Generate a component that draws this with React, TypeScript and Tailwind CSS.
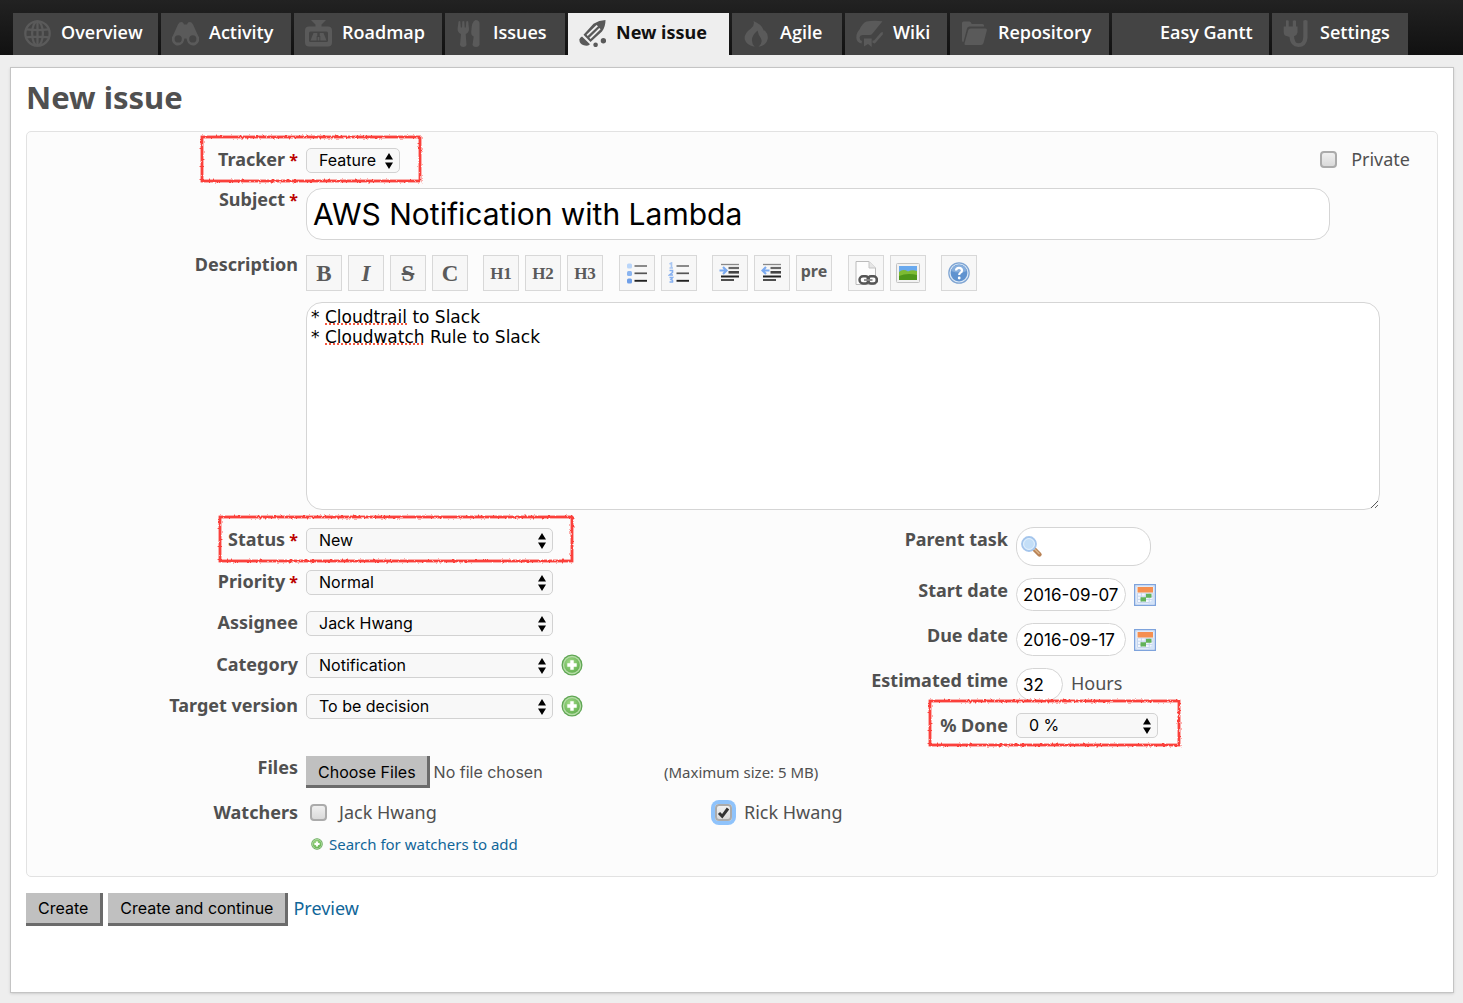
import React, { useId, type ReactNode } from 'react';

const ui = "font-['Inter',sans-serif]";

/* ---------- Tab icons ---------- */

function TabIcon({ children }: { children: ReactNode }) {
  return (
    <svg viewBox="0 0 27 27" className="h-[27px] w-[27px] shrink-0" fill="currentColor" aria-hidden="true">
      {children}
    </svg>
  );
}

const globe = (
  <TabIcon>
    <g fill="none" stroke="currentColor" strokeWidth="2.3">
      <circle cx="13.5" cy="13.5" r="12.2" />
      <ellipse cx="13.5" cy="13.5" rx="5.4" ry="12.2" />
      <path d="M2.5 9.4Q13.5 11 24.5 9.4M2 17.4Q13.5 16 25 17.4M13.5 1.5V25.5" />
    </g>
  </TabIcon>
);

const binoculars = (
  <TabIcon>
    <path
      fillRule="evenodd"
      d="M6 4.5Q8 1 11 2.5L12 4.5H15L16 2.5Q19 1 21 4.5L26 15.5A6.2 6.2 0 1 1 15 20.5L14.6 18.5H12.4L12 20.5A6.2 6.2 0 1 1 1 15.5ZM6.2 15.3A3.6 3.6 0 1 0 6.2 22.5A3.6 3.6 0 1 0 6.2 15.3ZM20.8 15.3A3.6 3.6 0 1 0 20.8 22.5A3.6 3.6 0 1 0 20.8 15.3Z"
    />
  </TabIcon>
);

const roadmap = (
  <TabIcon>
    <path d="M6 0H21L16.5 4.5V7H10.5V4.5Z" />
    <path
      fillRule="evenodd"
      d="M4 6.5H23Q27 6.5 27 10.5V22.5Q27 26.5 23 26.5H4Q0 26.5 0 22.5V10.5Q0 6.5 4 6.5ZM5.5 11.5Q4 11.5 4 13V20.5Q4 22 5.5 22H21.5Q23 22 23 20.5V13Q23 11.5 21.5 11.5Z"
    />
    <path d="M8.5 13H12.3V16H11.7V20.5H5.5ZM14.7 13H18.5L21.5 20.5H15.3V16H14.7ZM12.6 17H14.4V20.5H12.6Z" />
  </TabIcon>
);

const cutlery = (
  <TabIcon>
    <path d="M2.5 1.5Q3.5 .5 4.3 1.5L4.8 7.5H6L6.3 1.5Q7.3 .5 8.3 1.5L8.7 7.5H9.8L10.3 1.5Q11.3 .5 12.2 1.5L13 9Q13 12.5 9.7 14L10.5 25Q9.8 27 7.3 27T4 25L5 14Q1.6 12.5 1.6 9Z" />
    <path d="M19.5 0Q23.5 0 23.5 3.5V25Q22.8 27 20 27T16.5 25L17.7 16.5Q15 15.5 15.2 12Q15.7 1 19.5 0Z" />
  </TabIcon>
);

const pencil = (
  <TabIcon>
    <path
      fillRule="evenodd"
      d="M26.5 0Q26.5 7 23 11.5L11.5 22L4.5 14.8L14.5 3.8Q20 .3 26.5 0ZM17.5 5L7.5 14.7L8.7 15.9L19 6.3ZM20.3 8L10.3 17.7L11.6 19L21.6 9.3Z"
    />
    <path d="M3 16.5L11 24.2Q8.5 26.5 4.8 25.3Q.5 24 .3 19.5Q1 17.5 3 16.5Z" />
    <circle cx="24.4" cy="20.7" r="2.7" />
    <circle cx="16.6" cy="24.8" r="2.3" />
  </TabIcon>
);

const flame = (
  <TabIcon>
    <path d="M10.5 1Q19 4.5 20.5 10Q21.3 12 21.5 10Q26 15 24.5 19.5Q23 25.5 15.5 26.8Q20 23 18 18.5Q15.5 15.5 14.5 10.5Q9.5 15 9 19Q8.5 24 11.7 26.8Q3.5 25.5 1.8 19.5Q.8 13.5 8 8.5Q12 5 10.5 1Z" />
  </TabIcon>
);

const wiki = (
  <TabIcon>
    <path d="M10.5 1.5Q18 .2 26.5 1.3L16.5 13.5Q15.5 15 13.5 15H6.5Q3.8 15 3.5 17.5Q3.5 20 6 21L5.5 23.5Q.5 22.5 .3 17.5Q.2 13 3.5 9.5Q6.5 3 10.5 1.5Z" />
    <path d="M26.8 12V14.5L18.8 23.5L16.5 22.8V20.5L18 20.5L25 12.5ZM8 18.5H15.7V27L12 24L8 26.5Z" />
  </TabIcon>
);

const folder = (
  <TabIcon>
    <path d="M1 3Q1 1.5 2.5 1.5H8.5Q10 1.5 10.7 4H21.5Q23 4 23 5.5V6.5H8.5Q6.5 6.5 6 8.5L2.5 22Q1 22 1 20.5Z" />
    <path d="M9.5 8.5H24.5Q26.3 8.5 25.8 10.5L22.5 23Q21.8 25 20 25H4.3Q3 25 3.6 23L7.3 10Q7.8 8.5 9.5 8.5Z" />
  </TabIcon>
);

const plug = (
  <TabIcon>
    <path d="M3 .5Q4.5-.2 5.7 .7V6.5H9.8V.7Q11.5-.3 13 .7V6.5H14.5V12.5Q14 15.5 11 16.2Q11.5 23.3 15.5 23.3Q20 23.3 20.3 17V.7Q22.5-.5 24.5 .7V18Q23.5 27 15.5 27Q7 26.5 6.5 17L2 15.5Q.7 14.5 .7 12V6.5H3Z" />
  </TabIcon>
);

const tabs: { name: string; icon: ReactNode; width: string }[] = [
  { name: 'Overview', icon: globe, width: 'w-[145px]' },
  { name: 'Activity', icon: binoculars, width: 'w-[130px]' },
  { name: 'Roadmap', icon: roadmap, width: 'w-[148px]' },
  { name: 'Issues', icon: cutlery, width: 'w-[120px]' },
  { name: 'New issue', icon: pencil, width: 'w-[161px]' },
  { name: 'Agile', icon: flame, width: 'w-[110px]' },
  { name: 'Wiki', icon: wiki, width: 'w-[102px]' },
  { name: 'Repository', icon: folder, width: 'w-[159px]' },
  { name: 'Easy Gantt', icon: <TabIcon>{null}</TabIcon>, width: 'w-[157px]' },
  { name: 'Settings', icon: plug, width: 'w-[136px]' },
];

/* ---------- Small drawings ---------- */

function AddIcon({ className }: { className: string }) {
  const id = useId();
  return (
    <svg viewBox="0 0 22 22" className={className} aria-hidden="true">
      <radialGradient id={id} cx=".4" cy=".35" r=".7">
        <stop offset="0" stopColor="#a5dc8c" />
        <stop offset="1" stopColor="#62b04f" />
      </radialGradient>
      <circle cx="11" cy="11" r="10.5" fill="#5fa653" />
      <circle cx="11" cy="11" r="9.2" fill="#b6dca7" />
      <circle cx="11" cy="11" r="7.8" fill={`url(#${id})`} />
      <path d="M9.3 6.3h3.4v3h3v3.4h-3v3H9.3v-3h-3V9.3h3z" fill="#fff" />
    </svg>
  );
}

function CalendarIcon() {
  return (
    <svg viewBox="0 0 22 22" className="h-[22px] w-[22px]" aria-hidden="true">
      <rect x=".7" y=".7" width="20.6" height="20.6" fill="#fff" stroke="#7ea3dc" strokeWidth="1.4" />
      <rect x="2" y="2" width="18" height="18" fill="none" stroke="#c3d6f2" />
      <path
        d="M3.5 9H19V18.5H3.5ZM3.5 12.2H19M3.5 15.4H19M7.4 9V18.5M11.3 9V18.5M15.2 9V18.5"
        fill="#f3f7fd"
        stroke="#c6d6ee"
      />
      <rect x="3.5" y="3" width="15.5" height="5.5" fill="#f58f4f" />
      <path d="M12 9.8H17.5V13.8H12ZM6.5 13.3H12V17.6H6.5Z" fill="#62b25a" />
      <path d="M14 20L20 14V20Z" fill="#d3e3f8" />
    </svg>
  );
}

function Magnifier() {
  return (
    <svg viewBox="0 0 22 22" className="pointer-events-none absolute top-[9px] left-[5px] h-[22px] w-[22px]" aria-hidden="true">
      <path d="M13 13L18.5 18.5" stroke="#b98255" strokeWidth="4.4" strokeLinecap="round" />
      <path d="M13.5 13L18 17.5" stroke="#dcb58b" strokeWidth="1.5" strokeLinecap="round" />
      <circle cx="8" cy="8" r="7" fill="#c3def7" stroke="#a4c5ec" strokeWidth="1.8" />
      <circle cx="8" cy="8" r="5.4" fill="none" stroke="#e3f1fd" />
    </svg>
  );
}

function ListIcon({ numbered }: { numbered?: boolean }) {
  return (
    <svg viewBox="0 0 22 22" className="h-[22px] w-[22px]" aria-hidden="true">
      {numbered ? (
        <g fill="none" stroke="#86b0f0" strokeWidth="1.6">
          <path d="M1.5 2L3.5 1V6M1.5 6H5" opacity=".7" />
          <path d="M1.5 8.5H4.5V10.5L1.5 13H5" />
          <path d="M1.5 15.5H4.5L3 17.5Q5 18 4.5 20H1.5" />
        </g>
      ) : (
        <g fill="#8ab4f0">
          <rect x="1" y="1.5" width="5" height="5" rx="1.5" fill="#b9d5f9" />
          <rect x="1" y="9" width="5" height="5" rx="1.5" />
          <rect x="1" y="16.5" width="5" height="5" rx="1.5" fill="#6f9fe8" />
        </g>
      )}
      <path d="M8.5 4H21" stroke="#777" strokeWidth="1.7" />
      <path d="M8.5 11.3H21" stroke="#555" strokeWidth="1.7" />
      <path d="M8.5 18.8H21" stroke="#222" strokeWidth="1.9" />
    </svg>
  );
}

function IndentIcon({ out }: { out?: boolean }) {
  return (
    <svg viewBox="0 0 22 22" className="h-[22px] w-[22px]" aria-hidden="true">
      <path d="M2 2.5H20" stroke="#888" strokeWidth="1.3" />
      <path d="M9.5 6H20" stroke="#666" strokeWidth="2.2" />
      <path d="M9.5 10.3H20" stroke="#444" strokeWidth="2.6" />
      <path d="M2 14.5H20" stroke="#222" strokeWidth="2" />
      <path d="M2 18H15" stroke="#222" strokeWidth="1.6" />
      <path
        d={out ? 'M8.5 8.5H2M5 5L1.5 8.5L5 12' : 'M.5 8.5H6.5M4 5L7.5 8.5L4 12'}
        fill="none"
        stroke="#7baaf0"
        strokeWidth="2.2"
      />
    </svg>
  );
}

function LinkDocIcon() {
  return (
    <svg viewBox="0 0 24 26" className="h-[26px] w-[24px]" aria-hidden="true">
      <path d="M2 1.5H15L21.5 8V24.5H2Z" fill="#fdfdfd" stroke="#bbb" />
      <path d="M15 1.5V8H21.5" fill="#e6e6e6" stroke="#c4c4c4" />
      <g fill="none" stroke="#555" strokeWidth="2.4">
        <rect x="5.5" y="16.3" width="9.5" height="7.2" rx="3.5" />
        <rect x="13.5" y="16.3" width="9.5" height="7.2" rx="3.5" />
        <path d="M10 20H18.5" stroke="#888" strokeWidth="1.8" />
      </g>
    </svg>
  );
}

function ImageIcon() {
  return (
    <svg viewBox="0 0 24 20" className="h-[20px] w-[24px]" aria-hidden="true">
      <rect x=".5" y=".5" width="23" height="19" rx="1" fill="#f2f2f2" stroke="#c2c2c2" />
      <rect x="3" y="3" width="18" height="14" fill="#69a9ee" />
      <path d="M3 9Q7 5.5 12 8.5Q16 6.5 21 8V17H3Z" fill="#7dbb33" />
      <path d="M3 13Q11 9.5 21 12V17H3Z" fill="#4e9619" />
    </svg>
  );
}

function HelpIcon() {
  return (
    <svg viewBox="0 0 22 22" className="h-[22px] w-[22px]" aria-hidden="true">
      <circle cx="11" cy="11" r="10.2" fill="#dbe8f6" stroke="#7ea4d2" strokeWidth="1.2" />
      <circle cx="11" cy="11" r="8.4" fill="#5f92cf" />
      <path d="M3.2 9A8 8 0 0 1 18.8 9Q11 12 3.2 9Z" fill="#86aedd" />
      <path
        d="M8 8.5Q8.2 5.8 11 5.8T14 8.4Q14 10 12.3 10.9Q11.2 11.5 11.2 13"
        fill="none"
        stroke="#fff"
        strokeWidth="2.2"
      />
      <circle cx="11.2" cy="16" r="1.4" fill="#fff" />
    </svg>
  );
}

/* Rough red crayon frame laid over a highlighted field */
function Highlight({ className }: { className: string }) {
  const id = useId();
  return (
    <svg className={`pointer-events-none absolute overflow-visible ${className}`} aria-hidden="true">
      <filter id={id} x="-5%" y="-15%" width="110%" height="130%">
        <feTurbulence type="fractalNoise" baseFrequency="0.45" numOctaves="2" seed="4" />
        <feDisplacementMap in="SourceGraphic" scale="3" />
      </filter>
      <rect width="100%" height="100%" fill="none" stroke="#fb3f3a" strokeWidth="2.8" filter={`url(#${id})`} />
    </svg>
  );
}

/* ---------- Form parts ---------- */

function Row({
  label,
  htmlFor,
  required,
  wide,
  children,
}: {
  label: string;
  htmlFor?: string;
  required?: boolean;
  wide?: boolean;
  children: ReactNode;
}) {
  return (
    <div className="relative flex items-start gap-2">
      <label
        htmlFor={htmlFor}
        className={`shrink-0 text-right text-[18px] font-bold whitespace-nowrap ${
          wide ? 'w-[276px] leading-[24px]' : 'w-[271px] leading-[22px]'
        }`}
      >
        {label}
        {required && <span className="text-[16px] text-[#bb0000]"> *</span>}
      </label>
      {children}
    </div>
  );
}

function Select({ id, options, width }: { id: string; options: string[]; width: string }) {
  return (
    <span className={`relative block ${width}`}>
      <select
        id={id}
        className={`${ui} block h-[25px] w-full appearance-none rounded-[5px] border border-[#d2d2d2] bg-[#f8f8f8] pb-px pl-3 text-[16px] leading-[20px] text-black`}
      >
        {options.map((o) => (
          <option key={o}>{o}</option>
        ))}
      </select>
      <svg viewBox="0 0 8 16" className="pointer-events-none absolute top-[5px] right-[7px] h-4 w-2" aria-hidden="true">
        <path d="M4 0L8 6.5H0ZM4 16L0 9.5H8Z" />
      </svg>
    </span>
  );
}

function Checkbox({ id, checked }: { id: string; checked?: boolean }) {
  return (
    <span className={`relative block h-[17px] w-[17px] shrink-0 rounded-[4px] ${checked ? 'ring-4 ring-[#8fc3fb]' : ''}`}>
      <input
        id={id}
        type="checkbox"
        defaultChecked={checked}
        className="peer block h-[17px] w-[17px] appearance-none rounded-[4px] border-2 border-[#ababab] bg-linear-to-b from-[#f0f0f0] to-[#dadada]"
      />
      <svg viewBox="0 0 17 17" className="pointer-events-none absolute inset-0 hidden h-[17px] w-[17px] peer-checked:block" aria-hidden="true">
        <path d="M4 9L7.2 12.3L13 4.5" fill="none" stroke="#333" strokeWidth="3" />
      </svg>
    </span>
  );
}

function ToolButton({ title, children }: { title: string; children: ReactNode }) {
  return (
    <button
      type="button"
      title={title}
      aria-label={title}
      className="flex h-9 w-9 items-center justify-center border border-[#d8d8d8] bg-[#f7f7f7] font-['Liberation_Serif',serif] text-[23px] leading-none font-bold text-[#5a5a5a]"
    >
      {children}
    </button>
  );
}

const pill = `${ui} rounded-[18px] border border-[#d5d5d5] bg-white px-[6px] text-[17px] text-black`;
const raised = `${ui} h-[33px] border-r-3 border-b-3 border-[#6b6b6b] bg-[#c0c0c0] px-3 text-[16px] text-black`;

export default function App() {
  return (
    <div className="flex min-h-screen flex-col bg-[#eeeeee] font-['Noto_Sans',sans-serif] text-[#505050]">
      <nav className="flex gap-[3px] bg-linear-to-b from-[#222] to-[#111] pt-[13px] pl-[13px]">
        {tabs.map((t) => {
          const active = t.name === 'New issue';
          return (
            <a
              key={t.name}
              href="#"
              aria-current={active ? 'page' : undefined}
              className={`flex h-[42px] shrink-0 items-start pt-[7px] pl-[11px] whitespace-nowrap ${t.width} ${
                active ? 'bg-[#eeeeee] text-[#595959]' : 'bg-[#444] text-[#5a5a5a]'
              }`}
            >
              {t.icon}
              <span
                className={`pl-[10px] text-[18px] leading-[24px] ${
                  active ? 'font-bold text-[#111]' : "font-['Open_Sans',sans-serif] font-semibold text-white"
                }`}
              >
                {t.name}
              </span>
            </a>
          );
        })}
      </nav>

      <main className="mt-3 mr-[9px] mb-[10px] ml-[10px] flex-1 border border-[#c4c4c4] bg-white px-[15px] pt-[9px] shadow-sm">
        <h2 className="text-[31px] leading-[40px] font-bold">New issue</h2>

        <form onSubmit={(e) => e.preventDefault()}>
          <div className="mt-[14px] rounded-[5px] border border-[#e2e2e2] bg-[#fcfcfc] pt-4 pb-[21px]">
            <div className="relative flex items-start justify-between">
              <Row label="Tracker" htmlFor="tracker" required>
                <Select id="tracker" options={['Feature', 'Bug', 'Support']} width="w-[94px]" />
              </Row>
              <div className="flex items-center gap-[14px] pr-[27px]">
                <Checkbox id="private" />
                <label htmlFor="private" className="text-[18px] leading-[22px]">
                  Private
                </label>
              </div>
              <Highlight className="top-[-11px] left-[175px] h-[44px] w-[218px]" />
            </div>

            <div className="mt-[15px]">
              <Row label="Subject" htmlFor="subject" required>
                <input
                  id="subject"
                  defaultValue="AWS Notification with Lambda"
                  className={`${ui} mr-[107px] h-[52px] min-w-0 flex-1 rounded-[16px] border border-[#d5d5d5] bg-white px-[6px] text-[30px] text-black`}
                />
              </Row>
            </div>

            <div className="mt-[13px]">
              <Row label="Description" htmlFor="description">
                <div className="mr-[57px] min-w-0 flex-1 pt-[2px]">
                  <div className="flex gap-[15px]">
                    <div className="flex gap-[6px]">
                      <ToolButton title="Strong">B</ToolButton>
                      <ToolButton title="Italic">
                        <span className="italic">I</span>
                      </ToolButton>
                      <ToolButton title="Deleted">
                        <span className="line-through">S</span>
                      </ToolButton>
                      <ToolButton title="Inline code">C</ToolButton>
                    </div>
                    <div className="flex gap-[6px]">
                      <ToolButton title="Heading 1">
                        <span className="text-[17px]">H1</span>
                      </ToolButton>
                      <ToolButton title="Heading 2">
                        <span className="text-[17px]">H2</span>
                      </ToolButton>
                      <ToolButton title="Heading 3">
                        <span className="text-[17px]">H3</span>
                      </ToolButton>
                    </div>
                    <div className="flex gap-[6px] pl-px">
                      <ToolButton title="Unordered list">
                        <ListIcon />
                      </ToolButton>
                      <ToolButton title="Ordered list">
                        <ListIcon numbered />
                      </ToolButton>
                    </div>
                    <div className="flex gap-[6px]">
                      <ToolButton title="Quote">
                        <IndentIcon />
                      </ToolButton>
                      <ToolButton title="Remove quote">
                        <IndentIcon out />
                      </ToolButton>
                      <ToolButton title="Preformatted text">
                        <span className="pb-1 font-['Noto_Sans',sans-serif] text-[16px]">pre</span>
                      </ToolButton>
                    </div>
                    <div className="flex gap-[6px] pl-px">
                      <ToolButton title="Link to a wiki page">
                        <LinkDocIcon />
                      </ToolButton>
                      <ToolButton title="Image">
                        <ImageIcon />
                      </ToolButton>
                    </div>
                    <ToolButton title="Help">
                      <HelpIcon />
                    </ToolButton>
                  </div>
                  <div className="relative mt-[11px]">
                    <textarea
                      id="description"
                      spellCheck={false}
                      defaultValue={'* Cloudtrail to Slack\n* Cloudwatch Rule to Slack'}
                      className="block h-[208px] w-full rounded-[16px] border border-[#d5d5d5] bg-white px-1 py-1 font-['DejaVu_Sans',sans-serif] text-[17px] leading-[20px] text-black"
                    />
                    <span className="pointer-events-none absolute top-[21px] left-[19px] w-[82px] border-b-2 border-dotted border-[#f4573f]" />
                    <span className="pointer-events-none absolute top-[41px] left-[19px] w-[98px] border-b-2 border-dotted border-[#f4573f]" />
                  </div>
                </div>
              </Row>
            </div>

            <div className="mt-[17px] grid grid-cols-2">
              <div className="relative flex h-[192px] flex-col justify-between pt-px">
                <Row label="Status" htmlFor="status" required>
                  <Select id="status" options={['New', 'In Progress', 'Resolved']} width="w-[247px]" />
                </Row>
                <Row label="Priority" htmlFor="priority" required>
                  <Select id="priority" options={['Normal', 'Low', 'High']} width="w-[247px]" />
                </Row>
                <Row label="Assignee" htmlFor="assignee">
                  <Select id="assignee" options={['Jack Hwang', 'Rick Hwang']} width="w-[247px]" />
                </Row>
                <Row label="Category" htmlFor="category">
                  <Select id="category" options={['Notification']} width="w-[247px]" />
                  <button type="button" aria-label="New category" className="pt-px">
                    <AddIcon className="h-[22px] w-[22px]" />
                  </button>
                </Row>
                <Row label="Target version" htmlFor="version">
                  <Select id="version" options={['To be decision']} width="w-[247px]" />
                  <button type="button" aria-label="New version" className="pt-px">
                    <AddIcon className="h-[22px] w-[22px]" />
                  </button>
                </Row>
                <Highlight className="top-[-10px] left-[193px] h-[44px] w-[352px]" />
              </div>

              <div className="relative flex flex-col gap-3">
                <Row label="Parent task" htmlFor="parent" wide>
                  <span className="relative">
                    <input id="parent" className={`${pill} block h-[39px] w-[135px] pl-7`} />
                    <Magnifier />
                  </span>
                </Row>
                <Row label="Start date" htmlFor="start" wide>
                  <input id="start" defaultValue="2016-09-07" className={`${pill} h-[33px] w-[110px]`} />
                  <button type="button" aria-label="Pick start date" className="pt-[6px]">
                    <CalendarIcon />
                  </button>
                </Row>
                <Row label="Due date" htmlFor="due" wide>
                  <input id="due" defaultValue="2016-09-17" className={`${pill} h-[33px] w-[110px]`} />
                  <button type="button" aria-label="Pick due date" className="pt-[6px]">
                    <CalendarIcon />
                  </button>
                </Row>
                <Row label="Estimated time" htmlFor="estimated" wide>
                  <input id="estimated" defaultValue="32" className={`${pill} h-[33px] w-[47px]`} />
                  <span className="text-[18px] leading-[30px]">Hours</span>
                </Row>
                <Row label="% Done" htmlFor="done" wide>
                  <Select id="done" options={['0 %', '10 %', '20 %', '50 %', '100 %']} width="w-[142px]" />
                </Row>
                <Highlight className="bottom-[-7px] left-[198px] h-[44px] w-[249px]" />
              </div>
            </div>

            <div className="mt-[18px]">
              <Row label="Files" htmlFor="files">
                <input
                  id="files"
                  type="file"
                  multiple
                  className={`${ui} w-[350px] text-[16px] leading-[32px] file:mr-1 file:h-8 file:border-0 file:border-r-3 file:border-b-3 file:border-solid file:border-[#6b6b6b] file:bg-[#c0c0c0] file:pr-[11px] file:pl-3 file:text-black`}
                />
                <span className="text-[15px] leading-[32px]">(Maximum size: 5 MB)</span>
              </Row>
            </div>

            <div className="mt-[13px]">
              <Row label="Watchers">
                <div className="grid grid-cols-[405px_auto] pl-1">
                  <div className="flex items-center gap-3">
                    <Checkbox id="jack" />
                    <label htmlFor="jack" className="text-[18px] leading-[22px]">
                      Jack Hwang
                    </label>
                  </div>
                  <div className="flex items-center gap-3">
                    <Checkbox id="rick" checked />
                    <label htmlFor="rick" className="text-[18px] leading-[22px]">
                      Rick Hwang
                    </label>
                  </div>
                  <a href="#" className="mt-[10px] flex items-center gap-[6px] pl-px text-[15px] leading-[22px] text-[#116699]">
                    <AddIcon className="h-3 w-3" />
                    Search for watchers to add
                  </a>
                </div>
              </Row>
            </div>
          </div>

          <div className="mt-4 flex items-start gap-[5px]">
            <button type="submit" className={raised}>
              Create
            </button>
            <button type="submit" className={raised}>
              Create and continue
            </button>
            <a href="#" className="text-[18px] leading-[30px] text-[#116699]">
              Preview
            </a>
          </div>
        </form>
      </main>
    </div>
  );
}
